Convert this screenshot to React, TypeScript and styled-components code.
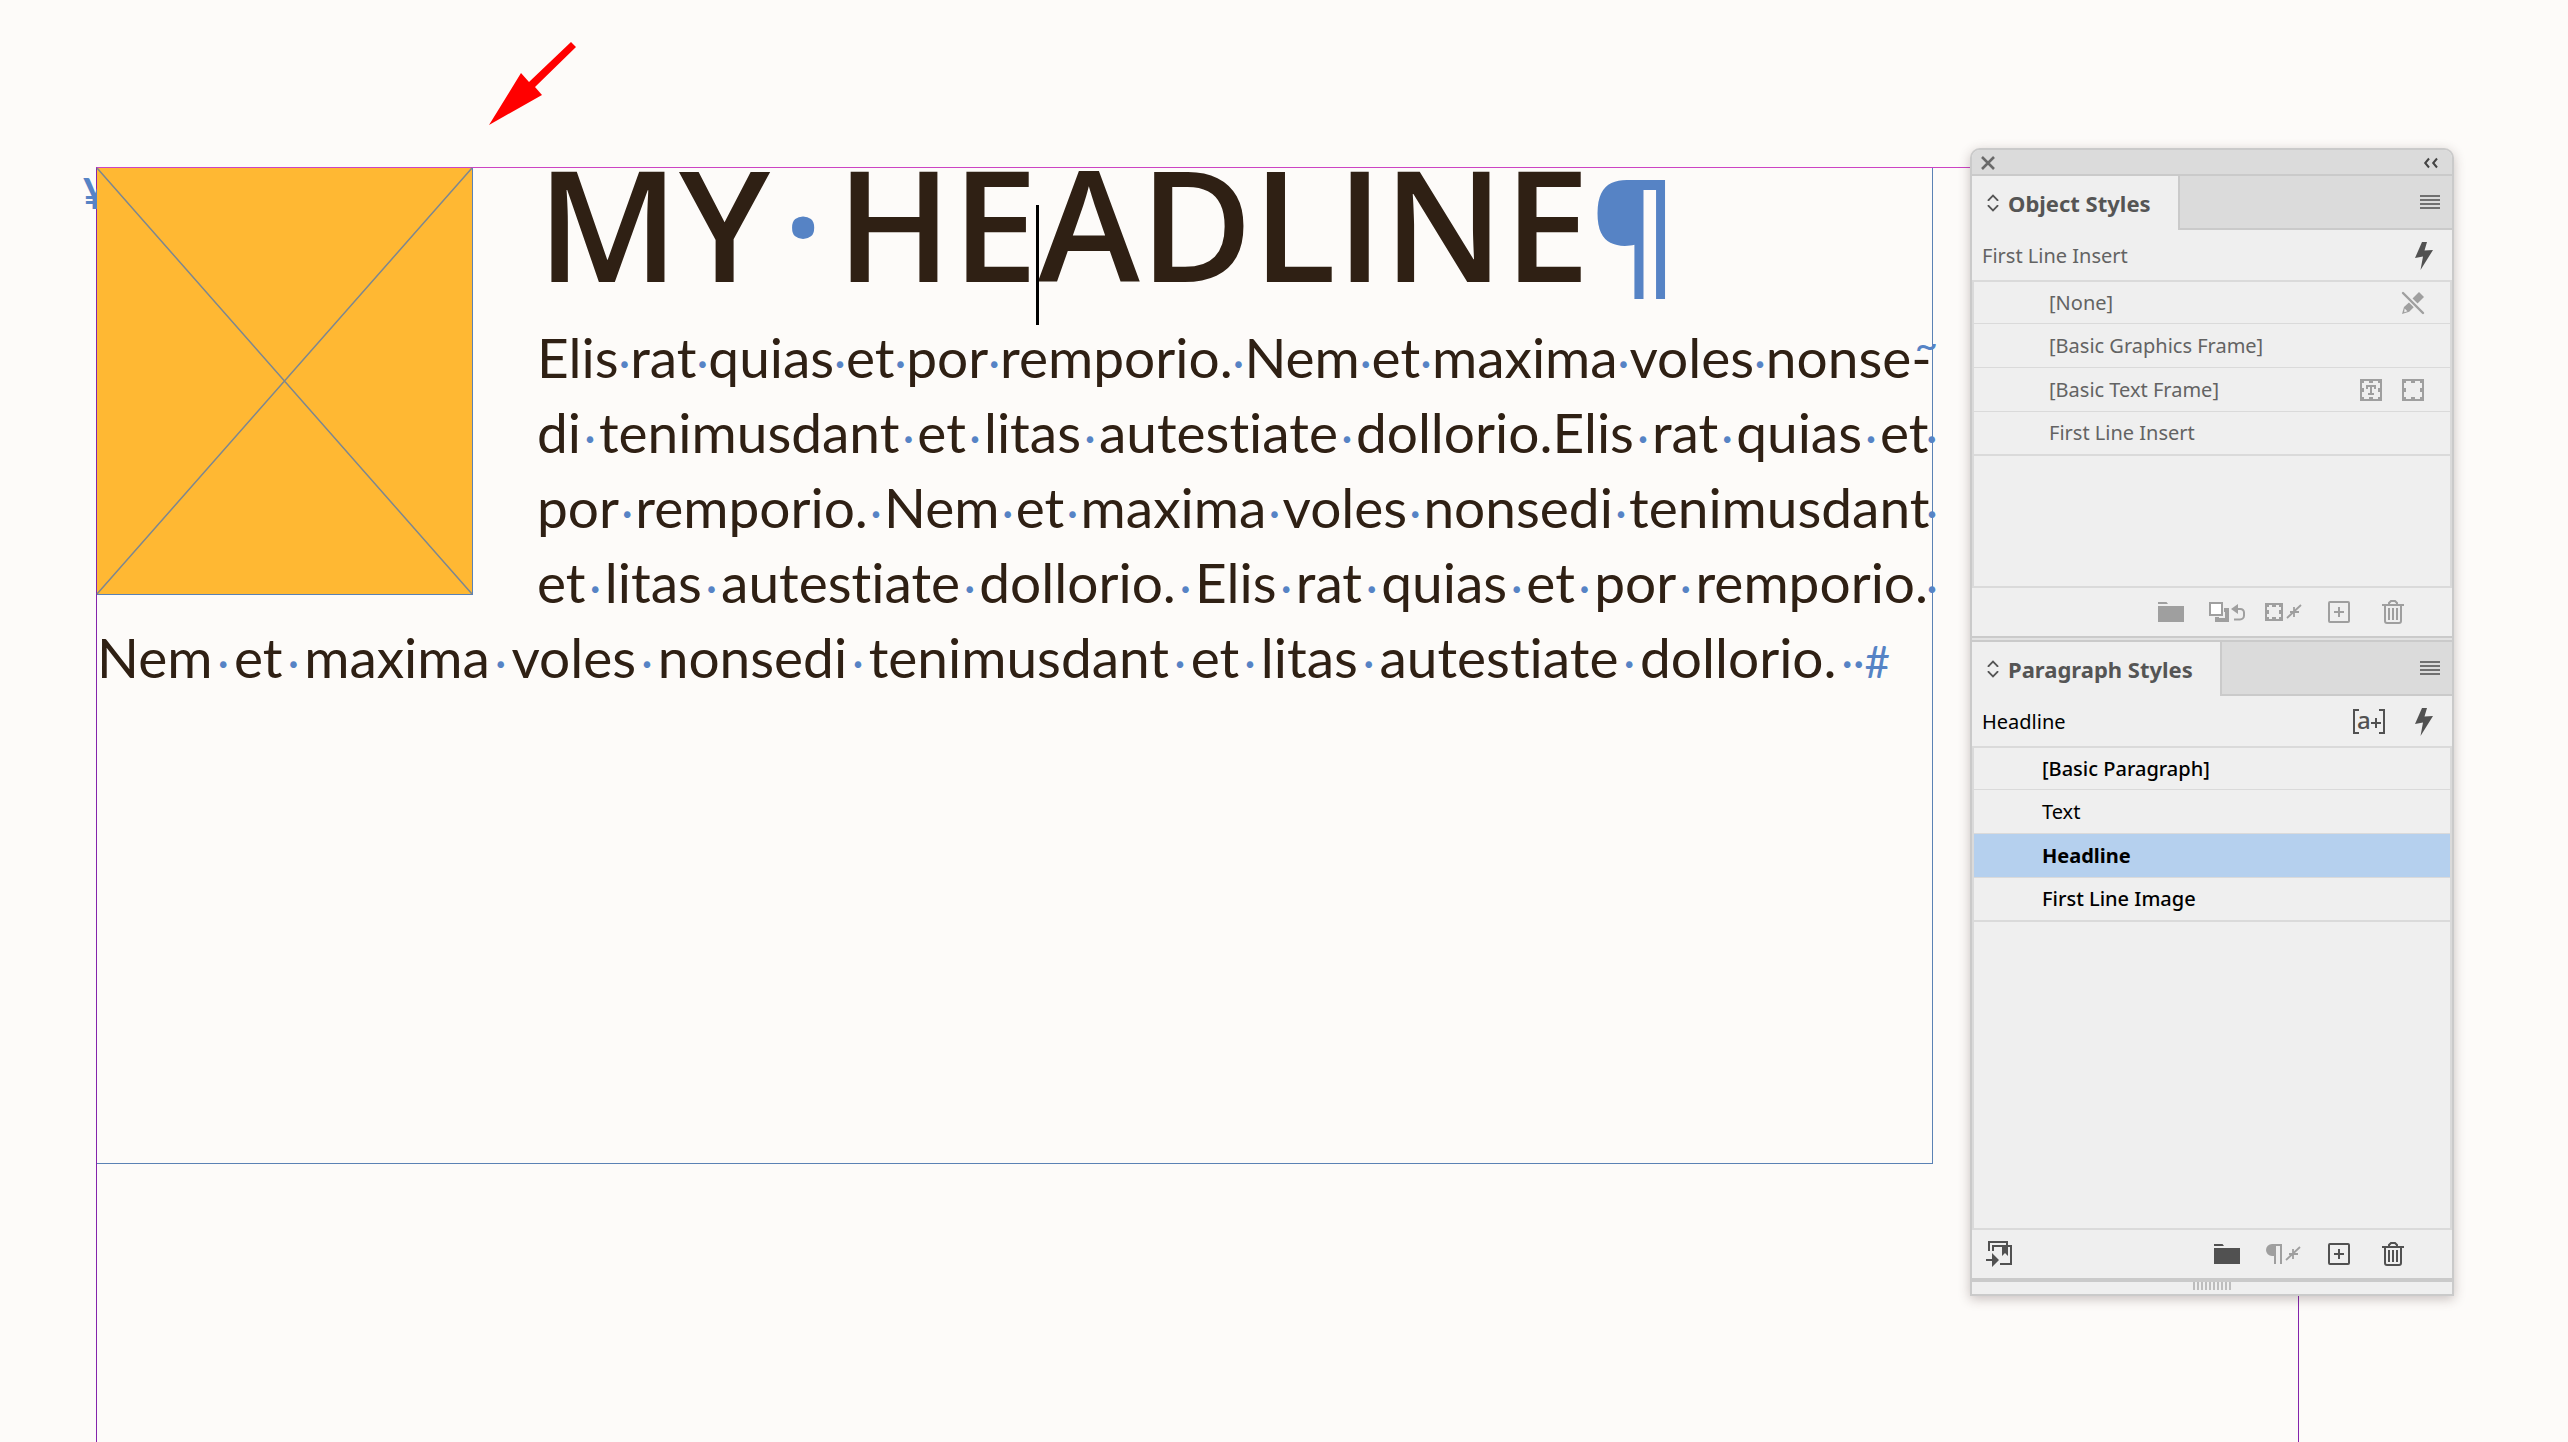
import React from 'react';
import styled, { createGlobalStyle, css } from 'styled-components';

const INK = '#2f2014';
const HIDDEN_CHARACTER = '#5683c5';
const FRAME_EDGE = '#5b82b5';
const MARGIN_GUIDE = '#cc44c4';
const COLUMN_GUIDE = '#8424ac';

const GlobalStyle = createGlobalStyle`
  * { box-sizing: border-box; }
  body {
    margin: 0;
    background: #fdfbf9;
    font-family: "Noto Sans", "Open Sans", sans-serif;
  }
  h1, h2, p, ul { margin: 0; padding: 0; }
  ul { list-style: none; }
  button {
    font: inherit;
    color: inherit;
    background: none;
    border: 0;
    padding: 0;
  }
  svg { display: block; overflow: visible; }
`;

/* ---------- document ---------- */

const Pasteboard = styled.main`
  position: relative;
  display: flex;
  min-height: 100vh;
  padding: 167px 269px 0 96px;
  overflow: hidden;
`;

const Page = styled.section`
  flex: 1;
  border: 1px solid ${COLUMN_GUIDE};
  border-top-color: ${MARGIN_GUIDE};
  border-bottom: 0;
`;

const TextFrame = styled.article`
  position: relative;
  margin-right: 365px;
  min-height: 996px;
  border: 1px solid ${FRAME_EDGE};
  border-width: 0 1px 1px 0;
  color: ${INK};
  font-family: Lato, "Open Sans", sans-serif;
`;

const AnchorMark = styled.span`
  position: absolute;
  top: 4px;
  left: -14px;
  color: ${HIDDEN_CHARACTER};
  font-size: 42px;
  font-weight: 700;
  line-height: 42px;
`;

const Picture = styled.figure`
  position: relative;
  float: left;
  width: 376px;
  height: 427px;
  margin: 0 64px 0 0;
  background: #ffb833;
  border: 1px solid ${FRAME_EDGE};
  border-width: 0 1px 1px 0;

  svg { width: 100%; height: 100%; }
`;

const Headline = styled.h1`
  margin-bottom: 44px;
  font-family: "Open Sans", "Noto Sans", sans-serif;
  font-size: 154px;
  font-weight: 600;
  line-height: 108px;
  white-space: nowrap;
`;

const Hidden = styled.span`
  color: ${HIDDEN_CHARACTER};
`;

const WordSpace = styled(Hidden)`
  margin: 0 12px;
`;

const ParagraphEnd = styled(Hidden)`
  font-size: 135px;
  line-height: 80px;
`;

const Caret = styled.span`
  position: relative;

  &::after {
    content: "";
    position: absolute;
    top: 88px;
    left: -2px;
    width: 3px;
    height: 120px;
    background: #000;
  }
`;

const Line = styled.span<{ $last?: boolean }>`
  display: flex;
  align-items: baseline;
  justify-content: space-between;
  font-size: 55px;
  font-variant-ligatures: none;
  line-height: 75px;
  white-space: nowrap;
  padding-right: ${p => (p.$last ? 42 : 0)}px;
`;

const Dot = styled(Hidden)`
  font-size: 44px;
  line-height: 44px;
`;

const Overhang = styled(Dot)`
  display: flex;
  justify-content: center;
  width: 0;
`;

const Hyphenation = styled(Hidden)`
  position: relative;
  width: 0;

  span {
    position: absolute;
    right: -6px;
    bottom: 24px;
    font-size: 40px;
    line-height: 20px;
  }
`;

const ArrowMark = styled.svg`
  position: absolute;
  top: 40px;
  left: 486px;
`;

function TextLine({ text, end, last }: { text: string; end?: React.ReactNode; last?: boolean }) {
  const words = text.split(' ');
  return (
    <Line $last={last}>
      {words.map((word, i) => (
        <React.Fragment key={i}>
          {i > 0 && <Dot>·</Dot>}
          <span>{word}</span>
        </React.Fragment>
      ))}
      {end}
    </Line>
  );
}

const trailingSpace = <Overhang>·</Overhang>;

/* ---------- panels ---------- */

const Dock = styled.aside`
  position: absolute;
  top: 148px;
  right: 114px;
  width: 484px;
  background: #efefef;
  border: 2px solid #cacaca;
  border-radius: 10px 10px 0 0;
  box-shadow: 0 3px 12px rgba(60, 40, 40, 0.28);
  font-size: 20px;
  line-height: 28px;
`;

const TitleBar = styled.header`
  display: flex;
  align-items: center;
  justify-content: space-between;
  height: 26px;
  padding: 2px 14px 0 10px;
  background: #dbdbdb;
  border-bottom: 2px solid #cacaca;
  border-radius: 8px 8px 0 0;
`;

const Panel = styled.section<{ $inactive?: boolean }>`
  color: ${p => (p.$inactive ? '#636363' : '#000')};
`;

const TabBar = styled.div`
  display: flex;
  height: 54px;
`;

const Tab = styled.button`
  display: flex;
  align-items: center;
  gap: 9px;
  padding: 0 27px 0 15px;
  color: #555;
  font-size: 22px;
  font-weight: 700;
`;

const TabRest = styled.div`
  display: flex;
  flex: 1;
  align-items: center;
  justify-content: flex-end;
  padding-right: 12px;
  background: #dbdbdb;
  border: 2px solid #cacaca;
  border-width: 0 0 2px 2px;
`;

const Current = styled.div`
  display: flex;
  align-items: center;
  gap: 30px;
  height: 50px;
  padding: 2px 19px 0 10px;

  span { flex: 1; }
`;

const StyleList = styled.ul<{ $height: number }>`
  min-height: ${p => p.$height}px;
  border: 2px solid #dadada;
`;

const Row = styled.button<{ $indent: number; $weight?: number; $selected?: boolean }>`
  display: flex;
  align-items: center;
  gap: 20px;
  width: 100%;
  height: 44px;
  padding: 0 26px 0 ${p => p.$indent}px;
  border-bottom: 1px solid #dadada;
  font-weight: ${p => p.$weight ?? 400};
  text-align: left;

  span { flex: 1; }

  li:first-child > & { height: 42px; }
  li:last-child > & { border-bottom-width: 2px; }

  ${p => p.$selected && css`
    background: #b5d0ee;
    box-shadow: 0 -1px #dadada;
  `}
`;

const Footer = styled.footer`
  display: flex;
  align-items: center;
  height: 50px;
  padding: 0 33px 0 14px;
  border-bottom: 2px solid #cacaca;
`;

const Tool = styled.button<{ $dim?: boolean; $width?: number }>`
  display: flex;
  justify-content: center;
  width: ${p => p.$width ?? 56}px;
  color: ${p => (p.$dim ? '#9f9f9f' : '#515151')};
`;

const IconButton = styled.button<{ $color?: string }>`
  display: flex;
  color: ${p => p.$color ?? '#515151'};
`;

const Spacer = styled.span`
  flex: 1;
`;

const Dim = styled.i`
  display: flex;
  color: #9f9f9f;
`;

const Seam = styled.div`
  height: 4px;
  background: #e2e2e2;
  border-bottom: 2px solid #cacaca;
`;

const Grip = styled.div`
  display: flex;
  justify-content: center;
  height: 14px;
  border-top: 2px solid #cacaca;
  color: #bdbdbd;
`;

/* ---------- icons ---------- */

const Svg = ({ w, h, children }: { w: number; h: number; children: React.ReactNode }) => (
  <svg width={w} height={h} viewBox={`0 0 ${w} ${h}`} fill="currentColor" aria-hidden="true">
    {children}
  </svg>
);

const CloseIcon = () => (
  <Svg w={12} h={12}><path d="M0 0l12 12M12 0L0 12" stroke="currentColor" strokeWidth="2.600" /></Svg>
);

const CollapseIcon = () => (
  <Svg w={14} h={10}><path d="M5 .5L1.200 5 5 9.500M13 .5L9.200 5l3.800 4.500" fill="none" stroke="currentColor" strokeWidth="2" /></Svg>
);

const SortIcon = () => (
  <Svg w={12} h={18}><path d="M1.500 7V6L6 1.500 10.500 6v1M1.500 11v1L6 16.500l4.500-4.500v-1" fill="none" stroke="currentColor" strokeWidth="1.800" /></Svg>
);

const MenuIcon = () => (
  <Svg w={20} h={14}><path d="M0 0h20v2H0zM0 4h20v2H0zM0 8h20v2H0zM0 12h20v2H0z" /></Svg>
);

const BoltIcon = () => (
  <Svg w={18} h={28}><path d="M7 0h5L9.500 8.500 18 8 5.500 28 8 14.500 0 16z" /></Svg>
);

const NoStyleIcon = () => (
  <Svg w={22} h={22}>
    <path d="M17 0l5 5-6.500 6.500-5-5z" />
    <path d="M7.500 10l4.700 4.700-5 5L0 22l2-7z" />
    <path d="M2.600 16.500l2.800 2.800-3.200 1z" fill="#efefef" />
    <path d="M1 1l20 20" stroke="#efefef" strokeWidth="5" />
    <path d="M1 1l20 20" stroke="currentColor" strokeWidth="2.400" strokeLinecap="round" />
  </Svg>
);

const FrameShape = ({ s }: { s: number }) => {
  const m = s / 2;
  return (
    <>
      <path d={`M1 1h${s - 2}v${s - 2}H1z`} fill="none" stroke="currentColor" strokeWidth="2" />
      <path d={`M${m - 2} 2h4v2h-4zM${m - 2} ${s - 4}h4v2h-4zM2 ${m - 2}h2v4H2zM${s - 4} ${m - 2}h2v4h-2z`} />
      <path d={`M2 2h2v2H2zM${s - 4} 2h2v2h-2zM2 ${s - 4}h2v2H2zM${s - 4} ${s - 4}h2v2h-2z`} />
    </>
  );
};

const FrameIcon = () => <Svg w={22} h={22}><FrameShape s={22} /></Svg>;

const TextFrameIcon = () => (
  <Svg w={22} h={22}>
    <FrameShape s={22} />
    <path d="M6 6h10v4h-2V8h-2v6h2v2H8v-2h2V8H8v2H6z" />
  </Svg>
);

const FolderIcon = () => (
  <Svg w={26} h={20}><path d="M0 0h8.500L10 2H0zM0 4h26v16H0z" /></Svg>
);

const ClearOverridesIcon = () => (
  <Svg w={36} h={20}>
    <path d="M1 1h12v12H1z" fill="#fff" stroke="currentColor" strokeWidth="2" />
    <path d="M15 6h5v14H6v-5h4v1h6v-6h-1z" />
    <path d="M28 7h3.500a3.500 3.500 0 0 1 3.500 3.500v3a4 4 0 0 1-4 4h-6" fill="none" stroke="currentColor" strokeWidth="2" />
    <path d="M29 2v10l-7-5z" />
  </Svg>
);

const Burst = ({ x }: { x: number }) => (
  <g transform={`translate(${x} 0)`}>
    <path d="M0 16L14 3M7 5v10M3 10h9" fill="none" stroke="currentColor" strokeWidth="1.800" />
  </g>
);

const ClearFrameIcon = () => (
  <Svg w={36} h={20}>
    <g transform="translate(0 1)"><FrameShape s={18} /></g>
    <Burst x={22} />
  </Svg>
);

const ClearParagraphIcon = () => (
  <Svg w={34} h={20}>
    <path d="M6 0h10v20h-2V2h-4v18H8v-8H6A6 6 0 0 1 6 0z" />
    <Burst x={20} />
  </Svg>
);

const NewIcon = () => (
  <Svg w={22} h={22}>
    <rect x="1" y="1" width="20" height="20" rx="1" fill="none" stroke="currentColor" strokeWidth="2" />
    <path d="M10 6h2v4h4v2h-4v4h-2v-4H6v-2h4z" />
  </Svg>
);

const TrashIcon = () => (
  <Svg w={22} h={24}>
    <path d="M0 4h22v2H0zM6 8h2v12H6zM10 8h2v12h-2zM14 8h2v12h-2z" />
    <path d="M3 6v15a2 2 0 0 0 2 2h12a2 2 0 0 0 2-2V6M7 4V3l2-2h4l2 2v1" fill="none" stroke="currentColor" strokeWidth="2" />
  </Svg>
);

const LoadIcon = () => (
  <Svg w={26} h={26}>
    <path d="M3 10V1h18v3M7 10V5h18v18H14" fill="none" stroke="currentColor" strokeWidth="2" />
    <path d="M16 4h6v11l-3-3-3 3zM0 18h6v-6l7 7-7 7v-6H0z" />
  </Svg>
);

const OverrideIcon = () => (
  <Svg w={32} h={26}>
    <path d="M6 1H1v23h5M26 1h5v23h-5" fill="none" stroke="currentColor" strokeWidth="2" />
    <text x="4" y="20" fontSize="24" fontWeight="500" fontFamily="Noto Sans, sans-serif">a</text>
    <path d="M22 9h2v4h4v2h-4v4h-2v-4h-4v-2h4z" />
  </Svg>
);

const GripIcon = () => (
  <Svg w={38} h={8}><path d="M1 0v8M5 0v8M9 0v8M13 0v8M17 0v8M21 0v8M25 0v8M29 0v8M33 0v8M37 0v8" stroke="currentColor" strokeWidth="2" /></Svg>
);

/* ---------- composition ---------- */

function PanelTabs({ title }: { title: string }) {
  return (
    <TabBar>
      <Tab type="button"><SortIcon />{title}</Tab>
      <TabRest>
        <IconButton type="button" aria-label={`${title} menu`} $color="#707070"><MenuIcon /></IconButton>
      </TabRest>
    </TabBar>
  );
}

function ObjectStyles() {
  return (
    <Panel $inactive>
      <PanelTabs title="Object Styles" />
      <Current>
        <span>First Line Insert</span>
        <IconButton type="button" aria-label="Quick apply"><BoltIcon /></IconButton>
      </Current>
      <StyleList $height={308}>
        <li><Row type="button" $indent={75}><span>[None]</span><Dim><NoStyleIcon /></Dim></Row></li>
        <li><Row type="button" $indent={75}><span>[Basic Graphics Frame]</span></Row></li>
        <li><Row type="button" $indent={75}><span>[Basic Text Frame]</span><Dim><TextFrameIcon /></Dim><Dim><FrameIcon /></Dim></Row></li>
        <li><Row type="button" $indent={75}><span>First Line Insert</span></Row></li>
      </StyleList>
      <Footer>
        <Spacer />
        <Tool type="button" $dim aria-label="New style group"><FolderIcon /></Tool>
        <Tool type="button" $dim aria-label="Clear attributes not defined by style"><ClearOverridesIcon /></Tool>
        <Tool type="button" $dim aria-label="Clear overrides"><ClearFrameIcon /></Tool>
        <Tool type="button" $dim aria-label="New style"><NewIcon /></Tool>
        <Tool type="button" $dim $width={52} aria-label="Delete style"><TrashIcon /></Tool>
      </Footer>
    </Panel>
  );
}

function ParagraphStyles() {
  return (
    <Panel>
      <PanelTabs title="Paragraph Styles" />
      <Current>
        <span>Headline</span>
        <IconButton type="button" aria-label="Style override highlighter"><OverrideIcon /></IconButton>
        <IconButton type="button" aria-label="Quick apply"><BoltIcon /></IconButton>
      </Current>
      <StyleList $height={484}>
        <li><Row type="button" $indent={68} $weight={500}><span>[Basic Paragraph]</span></Row></li>
        <li><Row type="button" $indent={68}><span>Text</span></Row></li>
        <li><Row type="button" $indent={68} $weight={700} $selected aria-pressed="true"><span>Headline</span></Row></li>
        <li><Row type="button" $indent={68} $weight={500}><span>First Line Image</span></Row></li>
      </StyleList>
      <Footer>
        <IconButton type="button" aria-label="Load styles"><LoadIcon /></IconButton>
        <Spacer />
        <Tool type="button" aria-label="New style group"><FolderIcon /></Tool>
        <Tool type="button" $dim aria-label="Clear overrides"><ClearParagraphIcon /></Tool>
        <Tool type="button" aria-label="New style"><NewIcon /></Tool>
        <Tool type="button" $width={52} aria-label="Delete style"><TrashIcon /></Tool>
      </Footer>
    </Panel>
  );
}

export default function App() {
  return (
    <>
      <GlobalStyle />
      <Pasteboard>
        <Page>
          <TextFrame>
            <AnchorMark>¥</AnchorMark>
            <Picture>
              <svg viewBox="0 0 374 425" preserveAspectRatio="none" aria-hidden="true">
                <path d="M0 0l374 425M374 0L0 425" fill="none" stroke="#7d8790" strokeWidth="1.500" />
              </svg>
            </Picture>
            <Headline>
              MY<WordSpace>·</WordSpace>HE<Caret />ADLINE<ParagraphEnd>¶</ParagraphEnd>
            </Headline>
            <p>
              <TextLine
                text="Elis rat quias et por remporio. Nem et maxima voles nonse-"
                end={<Hyphenation><span>~</span></Hyphenation>}
              />
              <TextLine text="di tenimusdant et litas autestiate dollorio.Elis rat quias et" end={trailingSpace} />
              <TextLine text="por remporio. Nem et maxima voles nonsedi tenimusdant" end={trailingSpace} />
              <TextLine text="et litas autestiate dollorio. Elis rat quias et por remporio." end={trailingSpace} />
              <TextLine
                last
                text="Nem et maxima voles nonsedi tenimusdant et litas autestiate dollorio."
                end={<Dot>··#</Dot>}
              />
            </p>
          </TextFrame>
        </Page>
        <ArrowMark width="92" height="88" viewBox="0 0 92 88" aria-hidden="true">
          <path d="M3 85L35 33l8 9L85 2l5 5-41 40 7 8z" fill="#f00" />
        </ArrowMark>
        <Dock>
          <TitleBar>
            <IconButton type="button" aria-label="Close panels" $color="#6a6a6a"><CloseIcon /></IconButton>
            <IconButton type="button" aria-label="Collapse panels" $color="#444"><CollapseIcon /></IconButton>
          </TitleBar>
          <ObjectStyles />
          <Seam />
          <ParagraphStyles />
          <Grip><GripIcon /></Grip>
        </Dock>
      </Pasteboard>
    </>
  );
}
